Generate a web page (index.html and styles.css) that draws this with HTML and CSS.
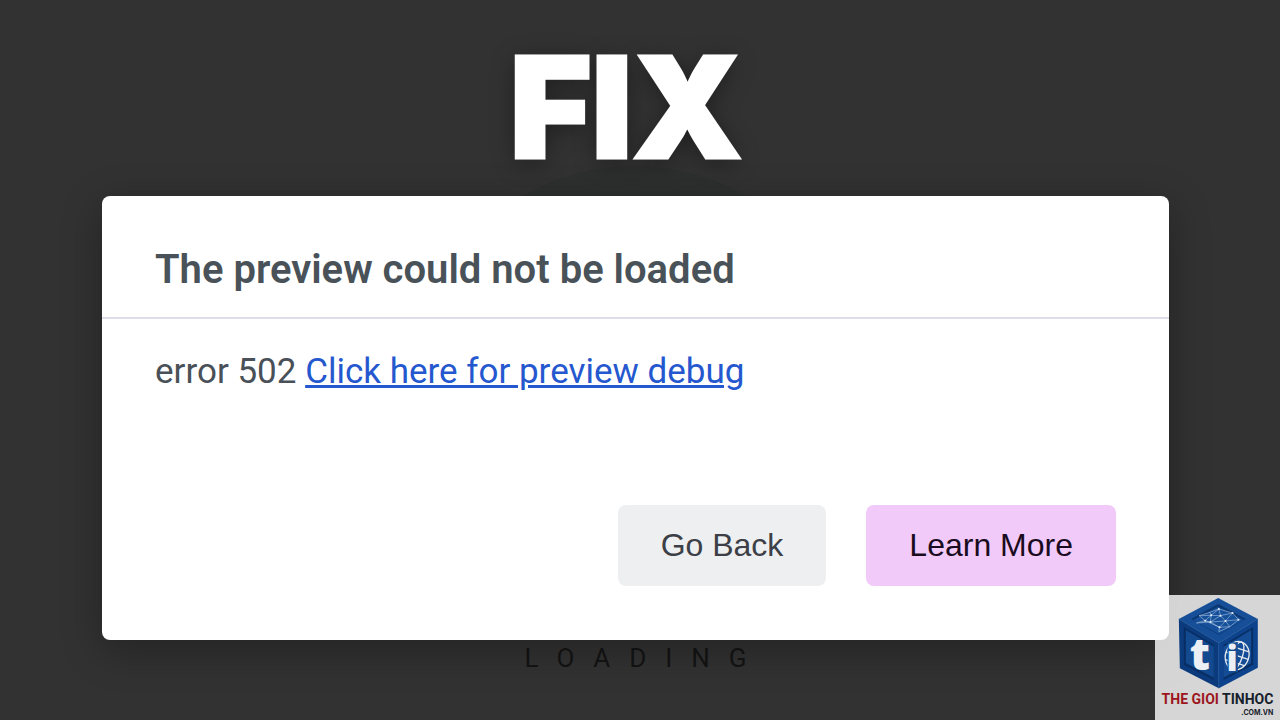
FILE: index.html
```
<!DOCTYPE html>
<html lang="en">
<head>
    <meta charset="UTF-8">
    <meta name="viewport" content="width=device-width, initial-scale=1.0">
    <title>The preview could not be loaded</title>
    <link rel="stylesheet" href="styles.css">
</head>
<body>
    <h1 class="headline">FIX</h1>

    <main class="stage">
        <section class="dialog" role="dialog" aria-labelledby="dialog-title">
            <h2 id="dialog-title" class="dialog-title">The preview could not be loaded</h2>
            <p class="dialog-body">error 502 <a href="#debug">Click here for preview debug</a></p>
            <div class="dialog-actions">
                <button type="button" class="btn">Go Back</button>
                <button type="button" class="btn btn-primary">Learn More</button>
            </div>
        </section>
    </main>

    <p class="loading">LOADING</p>

    <aside class="watermark">
        <svg class="cube" viewBox="20 14 245 276" aria-hidden="true">
            <!-- faces -->
            <polygon points="143,17 262,80 145,152 25,80" fill="#164e97"/>
            <polygon points="25,80 145,152 145,288 28,228" fill="#0b3b7d"/>
            <polygon points="262,80 145,152 145,288 262,226" fill="#0d438c"/>
            <!-- recessed panels -->
            <polygon points="143,35 226,80 145,128 62,80" fill="#0b3672"/>
            <polygon points="143,43 220,83 145,126 68,83" fill="#17509a"/>
            <polygon points="40,104 130,157 130,263 40,217" fill="#082e64"/>
            <polygon points="46,113 130,163 130,256 46,212" fill="#12498f"/>
            <polygon points="248,104 159,157 159,263 248,217" fill="#082e64"/>
            <polygon points="242,113 159,163 159,256 242,212" fill="#144d95"/>
            <path d="M25,80 L145,152 L262,80 M145,152 V288" fill="none" stroke="#1a559c" stroke-width="2"/>
            <!-- network -->
            <g stroke="#b9d1ec" stroke-width="1.6" fill="none">
                <path d="M145,50 L118,60 L86,70 L104,85 L78,92 L120,89 L104,85 L122,69 L145,50 L150,70 L122,69 L120,89 L147,105 L165,86 L150,70 L186,62 L145,50 M186,62 L165,86 L204,82 L186,62 M204,82 L178,103 L165,86 L120,89 L150,70 M118,60 L122,69 L86,70 M147,105 L178,103 M104,85 L147,105 L145,118 L178,103"/>
            </g>
            <g fill="#e7f0fa">
                <circle cx="145" cy="50" r="3"/><circle cx="122" cy="69" r="3"/><circle cx="150" cy="70" r="3"/>
                <circle cx="186" cy="62" r="3"/><circle cx="120" cy="89" r="3"/><circle cx="165" cy="86" r="3"/>
                <circle cx="204" cy="82" r="3"/><circle cx="147" cy="105" r="3"/><circle cx="104" cy="85" r="3"/>
            </g>
            <!-- globe -->
            <g transform="rotate(18 200 190)" fill="none" stroke="#e4e9ef" stroke-width="4">
                <ellipse cx="200" cy="190" rx="35" ry="43"/>
                <ellipse cx="200" cy="190" rx="16" ry="43"/>
                <path d="M165,190 H235 M170,168 H230 M170,212 H230"/>
            </g>
            <path d="M171,150 H202 V240 H171 Z" fill="#144d95"/>
            <text class="cube-letter" x="58" y="234">t</text>
            <text class="cube-letter cube-letter-i" x="168" y="235">i</text>
        </svg>
        <div class="brand">
            <span class="brand-name"><span class="brand-red">THE GIOI</span> TINHOC</span>
            <span class="brand-domain">.COM.VN</span>
        </div>
    </aside>
</body>
</html>
```
FILE: styles.css
```
* {
    margin: 0;
    padding: 0;
    box-sizing: border-box;
}

body {
    position: relative;
    min-height: 100vh;
    background: #323232;
    font-family: Roboto, sans-serif;
    display: flex;
    flex-direction: column;
    overflow-x: hidden;
}

.headline {
    padding: 35px 28px 17px 0;
    font-family: Inter, sans-serif;
    font-size: 140px;
    font-weight: 900;
    line-height: 144px;
    text-align: center;
    color: #fff;
    -webkit-text-stroke: 3px #fff;
    text-shadow: 0 4px 24px rgba(0, 0, 0, 0.4);
}

.stage {
    position: relative;
    padding: 0 111px 0 102px;
}

/* spinner disc behind the dialog */
.stage::before {
    content: "";
    position: absolute;
    z-index: -1;
    top: -30px;
    left: 50%;
    width: 446px;
    height: 446px;
    margin-left: -228px;
    border-radius: 50%;
    background: #2d302f;
}

.dialog {
    background: #fff;
    border-radius: 8px;
    box-shadow: 0 10px 40px rgba(0, 0, 0, 0.3);
}

.dialog-title {
    padding: 50px 53px 24px;
    border-bottom: 2px solid #dfdee8;
    font-size: 40px;
    font-weight: 600;
    line-height: 47px;
    color: #495259;
}

.dialog-body {
    padding: 31px 53px 0;
    font-size: 35px;
    line-height: 44px;
    color: #495057;
}

.dialog-body a {
    color: #2558cf;
    text-decoration-thickness: 3px;
}

.dialog-actions {
    display: flex;
    justify-content: flex-end;
    gap: 40px;
    padding: 111px 53px 54px;
}

.btn {
    height: 81px;
    padding: 0 43px;
    border: none;
    border-radius: 8px;
    background: #eeeff1;
    color: #3c4046;
    font-family: "Liberation Sans", Arial, sans-serif;
    font-size: 32px;
    cursor: pointer;
}

.btn-primary {
    background: #f1cafa;
    color: #1a0b20;
}

.loading {
    padding: 3px 0 0 10px;
    font-size: 26px;
    line-height: 30px;
    letter-spacing: 19px;
    text-align: center;
    color: #141414;
}

.watermark {
    position: absolute;
    right: 0;
    bottom: 0;
    width: 125px;
    height: 125px;
    padding-top: 2px;
    background: rgba(255, 255, 255, 0.8);
    display: flex;
    flex-direction: column;
    align-items: center;
}

.cube {
    width: 82px;
    height: 92px;
}

.cube-letter {
    font-family: "Open Sans", sans-serif;
    font-size: 132px;
    font-weight: 800;
    fill: #eceff3;
}

.cube-letter-i {
    font-size: 104px;
}

.brand {
    display: flex;
    flex-direction: column;
    align-items: flex-end;
    font-weight: 700;
    white-space: nowrap;
    color: #17212b;
}

.brand-name {
    font-size: 14px;
    line-height: 20px;
}

.brand-red {
    color: #9c1620;
}

.brand-domain {
    font-family: Inter, sans-serif;
    font-size: 7px;
    line-height: 8px;
}
```
